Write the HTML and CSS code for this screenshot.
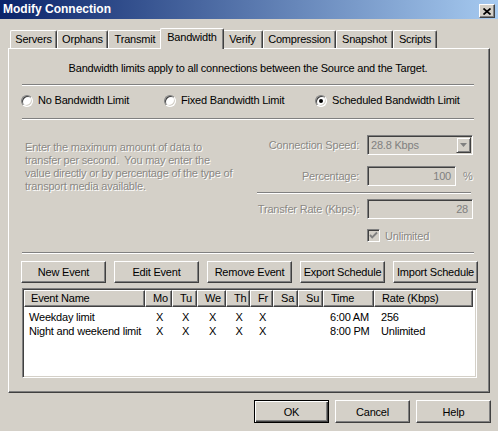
FILE: index.html
```html
<!DOCTYPE html>
<html>
<head>
<meta charset="utf-8">
<title>Modify Connection</title>
<link rel="stylesheet" href="styles.css">
</head>
<body>
<div class="window">
  <div class="titlebar">
    <span class="title">Modify Connection</span>
    <span class="close"><svg width="8" height="7" viewBox="0 0 8 7"><path d="M0.5 0.5 L7.5 6.5 M7.5 0.5 L0.5 6.5" stroke="#000" stroke-width="1.7" fill="none"/></svg></span>
  </div>
  <div class="tabs">
    <div class="tab t-servers">Servers</div>
    <div class="tab t-orphans">Orphans</div>
    <div class="tab t-transmit">Transmit</div>
    <div class="tab t-bandwidth active">Bandwidth</div>
    <div class="tab t-verify">Verify</div>
    <div class="tab t-compression">Compression</div>
    <div class="tab t-snapshot">Snapshot</div>
    <div class="tab t-scripts">Scripts</div>
  </div>
  <div class="panel">
    <p class="intro">Bandwidth limits apply to all connections between the Source and the Target.</p>
    <div class="sep"></div>
    <div class="radios">
      <div class="radio"><span class="rdot"></span>No Bandwidth Limit</div>
      <div class="radio"><span class="rdot"></span>Fixed Bandwidth Limit</div>
      <div class="radio"><span class="rdot checked"></span>Scheduled Bandwidth Limit</div>
    </div>
    <div class="sep sep-radios"></div>
    <div class="middle">
      <p class="help dis">Enter the maximum amount of data to<br>transfer per second.&nbsp; You may enter the<br>value directly or by percentage of the type of<br>transport media available.</p>
      <div class="form">
        <div class="row row-speed">
          <span class="lbl dis">Connection Speed:</span>
          <div class="field combo"><span class="ftext">28.8 Kbps</span><span class="drop"><svg width="7" height="4" viewBox="0 0 7 4"><path d="M0 0 H7 L3.5 4 Z" fill="#808080"/></svg></span></div>
        </div>
        <div class="row row-pct">
          <span class="lbl dis">Percentage:</span>
          <div class="field num pct"><span class="ftext">100</span></div>
          <span class="unit dis">%</span>
        </div>
        <div class="sep sep-form"></div>
        <div class="row row-rate">
          <span class="lbl dis">Transfer Rate (Kbps):</span>
          <div class="field num wide"><span class="ftext">28</span></div>
        </div>
        <div class="row row-check">
          <span class="check"><svg width="11" height="11" viewBox="0 0 11 11"><path d="M2 5 L4.2 7.3 L9 2.5" stroke="#808080" stroke-width="1.9" fill="none"/></svg></span>
          <span class="dis">Unlimited</span>
        </div>
      </div>
    </div>
    <div class="sep sep-mid"></div>
    <div class="actions">
      <div class="btn">New Event</div>
      <div class="btn">Edit Event</div>
      <div class="btn">Remove Event</div>
      <div class="btn">Export Schedule</div>
      <div class="btn">Import Schedule</div>
    </div>
    <div class="list">
      <div class="lhead cols">
        <div class="hcell first">Event Name</div>
        <div class="hcell">Mo</div>
        <div class="hcell">Tu</div>
        <div class="hcell">We</div>
        <div class="hcell">Th</div>
        <div class="hcell">Fr</div>
        <div class="hcell">Sa</div>
        <div class="hcell">Su</div>
        <div class="hcell">Time</div>
        <div class="hcell">Rate (Kbps)</div>
      </div>
      <div class="lrows">
        <div class="lrow cols">
          <div class="cell first">Weekday limit</div>
          <div class="cell day">X</div>
          <div class="cell day">X</div>
          <div class="cell day">X</div>
          <div class="cell day">X</div>
          <div class="cell day">X</div>
          <div class="cell day"></div>
          <div class="cell day"></div>
          <div class="cell">6:00 AM</div>
          <div class="cell">256</div>
        </div>
        <div class="lrow cols">
          <div class="cell first">Night and weekend limit</div>
          <div class="cell day">X</div>
          <div class="cell day">X</div>
          <div class="cell day">X</div>
          <div class="cell day">X</div>
          <div class="cell day">X</div>
          <div class="cell day"></div>
          <div class="cell day"></div>
          <div class="cell">8:00 PM</div>
          <div class="cell">Unlimited</div>
        </div>
      </div>
    </div>
  </div>
  <div class="footer">
    <div class="btn fbtn default">OK</div>
    <div class="btn fbtn">Cancel</div>
    <div class="btn fbtn">Help</div>
  </div>
</div>
</body>
</html>
```

FILE: styles.css
```css
* { box-sizing: border-box; }
html, body { margin: 0; padding: 0; }
body {
  width: 498px;
  height: 431px;
  overflow: hidden;
  background: #d4d0c8;
  font-family: "Liberation Sans", Arial, sans-serif;
  font-size: 11px;
  letter-spacing: -0.2px;
  color: #000;
}
p { margin: 0; }

.window {
  width: 498px;
  height: 431px;
  display: flex;
  flex-direction: column;
}

/* Title bar */
.titlebar {
  flex: none;
  height: 19px;
  display: flex;
  justify-content: space-between;
  align-items: flex-start;
  padding: 0 3px 0 3px;
  background: linear-gradient(to right, #0a246a, #a6caf0);
}
.title {
  color: #fff;
  font-weight: bold;
  font-size: 12px;
  letter-spacing: 0;
  line-height: 19px;
}
.close {
  margin-top: 4px;
  width: 16px;
  height: 14px;
  background: #d4d0c8;
  border: 1px solid;
  border-color: #fff #404040 #404040 #fff;
  box-shadow: inset -1px -1px #808080;
  display: flex;
  align-items: center;
  justify-content: center;
}

/* Tabs */
.tabs {
  flex: none;
  display: flex;
  align-items: flex-start;
  height: 20px;
  margin: 9px 0 0 10px;
}
.tab {
  height: 18px;
  margin-top: 2px;
  line-height: 16px;
  text-align: center;
  border: 1px solid #fff;
  border-bottom: none;
  border-right-color: #404040;
  box-shadow: inset -1px 0 #808080;
  border-radius: 2px 2px 0 0;
  background: #d4d0c8;
  white-space: nowrap;
}
.tab.active {
  height: 21px;
  margin: 0 -2px 0 -2px;
  position: relative;
  z-index: 2;
}
.t-servers { width: 47px; }
.t-orphans { width: 51px; }
.t-transmit { width: 54px; }
.t-bandwidth { width: 64px; }
.t-verify { width: 41px; }
.t-compression { width: 73px; }
.t-snapshot { width: 57px; }
.t-scripts { width: 44px; }

/* Panel */
.panel {
  flex: none;
  width: 482px;
  height: 345px;
  margin-left: 8px;
  border: 1px solid;
  border-color: #fff #404040 #404040 #fff;
  box-shadow: inset -1px -1px #808080;
  padding: 0 12px 0 13px;
  display: flex;
  flex-direction: column;
}
.intro {
  margin: 13px 3px 0 0;
  line-height: 13px;
  text-align: center;
  white-space: nowrap;
}
.sep {
  flex: none;
  height: 2px;
  border-top: 1px solid #808080;
  border-bottom: 1px solid #fff;
  margin-right: 3px;
  margin-top: 9px;
}
.sep-radios { margin-top: 11px; }
.sep-mid { margin-top: 0; }

.radios {
  display: grid;
  grid-template-columns: 143px 151px auto;
  margin: 8px 0 0 -1px;
  height: 13px;
}
.radio {
  display: flex;
  align-items: center;
  gap: 5px;
  white-space: nowrap;
  line-height: 13px;
}
.rdot {
  position: relative;
  flex: none;
  width: 12px;
  height: 12px;
  border-radius: 50%;
  background: #fff;
  border: 1px solid;
  border-color: #808080 #fff #fff #808080;
  box-shadow: inset 1px 1px #404040, inset -1px -1px #d4d0c8;
}
.rdot.checked::after {
  content: "";
  position: absolute;
  left: 3px;
  top: 3px;
  width: 4px;
  height: 4px;
  border-radius: 50%;
  background: #000;
}

/* Middle area */
.middle {
  flex: none;
  height: 132px;
  display: flex;
}
.dis {
  color: #8a8884;
  text-shadow: 1px 1px 0 #fff;
}
.help {
  flex: none;
  width: 235px;
  padding-left: 3px;
  margin-top: 21px;
  line-height: 13px;
  white-space: nowrap;
}
.form {
  flex: none;
  width: 217px;
  display: flex;
  flex-direction: column;
}
.row {
  display: flex;
  align-items: center;
  height: 20px;
  white-space: nowrap;
}
.row-speed { margin-top: 15px; }
.row-pct { margin-top: 11px; }
.row-rate { margin-top: 5px; }
.row-check { margin-top: 10px; height: 13px; padding-left: 110px; gap: 5px; }
.sep-form { margin-top: 6px; margin-right: 3px; }
.lbl {
  flex: none;
  width: 102px;
  margin-right: 8px;
  text-align: right;
}
.field {
  flex: none;
  height: 20px;
  background: #d4d0c8;
  border: 1px solid;
  border-color: #808080 #fff #fff #808080;
  box-shadow: inset 1px 1px #404040, inset -1px -1px #d4d0c8;
  display: flex;
  align-items: center;
  padding: 0 4px 0 3px;
  color: #808080;
}
.combo { width: 106px; padding-right: 1px; justify-content: space-between; }
.num { justify-content: flex-end; }
.pct { width: 89px; }
.wide { width: 106px; }
.unit { margin-left: 7px; }
.drop {
  width: 15px;
  height: 16px;
  border: 1px solid;
  border-color: #d4d0c8 #404040 #404040 #d4d0c8;
  box-shadow: inset 1px 1px #fff, inset -1px -1px #808080;
  display: flex;
  align-items: center;
  justify-content: center;
}
.check {
  flex: none;
  width: 13px;
  height: 13px;
  border: 1px solid;
  border-color: #808080 #fff #fff #808080;
  box-shadow: inset 1px 1px #404040, inset -1px -1px #d4d0c8;
  background: #d4d0c8;
  display: flex;
  align-items: center;
  justify-content: center;
}

/* Buttons */
.actions {
  flex: none;
  display: grid;
  grid-template-columns: repeat(5, 1fr);
  gap: 8px;
  height: 22px;
  margin: 7px -1px 0 -1px;
}
.btn {
  background: #d4d0c8;
  border: 1px solid;
  border-color: #fff #404040 #404040 #fff;
  box-shadow: inset -1px -1px #808080;
  display: flex;
  align-items: center;
  justify-content: center;
  white-space: nowrap;
}

/* List view */
.list {
  flex: none;
  height: 90px;
  margin-top: 5px;
  background: #fff;
  border: 1px solid;
  border-color: #808080 #fff #fff #808080;
  box-shadow: inset 1px 1px #404040, inset -1px -1px #d4d0c8;
  padding: 1px;
}
.cols {
  display: grid;
  grid-template-columns: 121px 27px 25px 29px 24px 23px 25px 25px 51px 99px;
}
.lhead { height: 17px; }
.hcell {
  background: #d4d0c8;
  border: 1px solid;
  border-color: #fff #404040 #404040 #fff;
  box-shadow: inset -1px -1px #808080;
  padding-left: 7px;
  line-height: 15px;
  white-space: nowrap;
  overflow: hidden;
}
.hcell.first { padding-left: 6px; }
.lrows { padding-top: 3px; }
.lrow { height: 14px; line-height: 14px; }
.cell { padding-left: 7px; white-space: nowrap; }
.cell.first { padding-left: 5px; }
.cell.day { padding-left: 2px; text-align: center; }

/* Footer */
.footer {
  flex: none;
  display: flex;
  justify-content: flex-end;
  gap: 6px;
  padding-right: 7px;
  margin-top: 7px;
}
.fbtn { width: 75px; height: 23px; }
.fbtn.default {
  border-color: #000;
  box-shadow: inset 1px 1px #fff, inset -1px -1px #404040, inset -2px -2px #808080;
}
```
